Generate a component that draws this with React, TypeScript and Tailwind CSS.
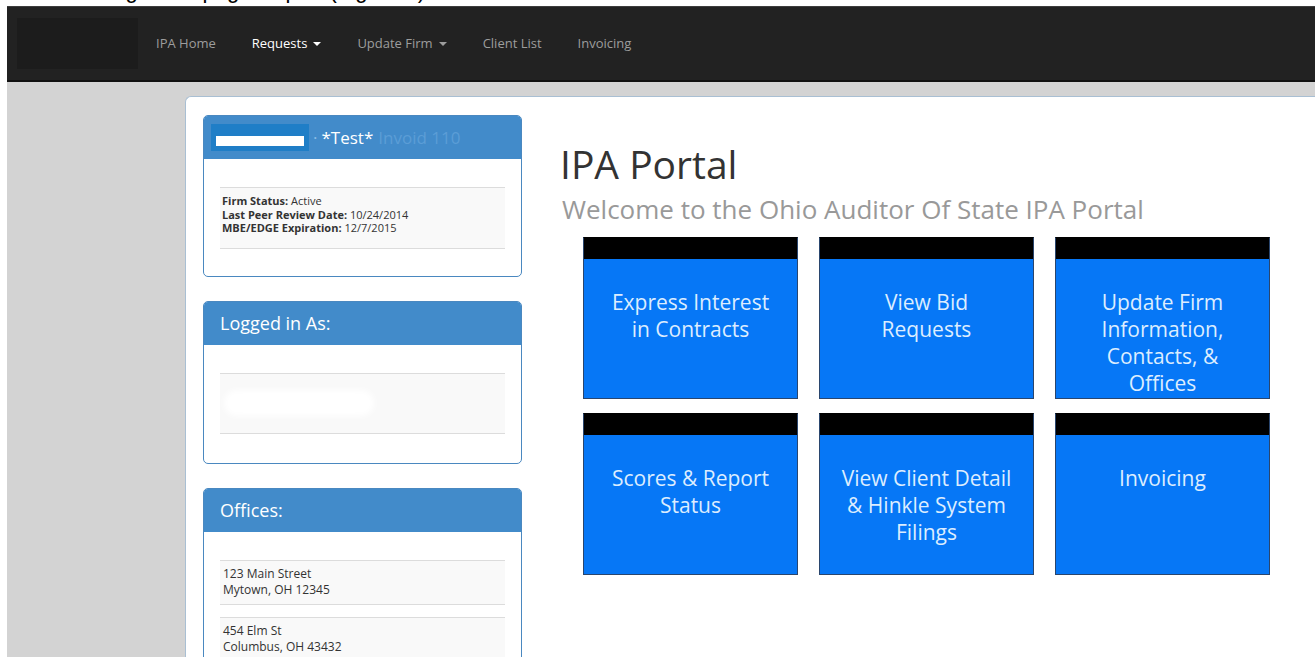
import type { ReactNode } from "react";

const navLinks = [
  { label: "IPA Home" },
  { label: "Requests", caret: true, active: true },
  { label: "Update Firm", caret: true },
  { label: "Client List" },
  { label: "Invoicing" },
];

const tiles = [
  ["Express Interest", "in Contracts"],
  ["View Bid", "Requests"],
  ["Update Firm", "Information,", "Contacts, &", "Offices"],
  ["Scores & Report", "Status"],
  ["View Client Detail", "& Hinkle System", "Filings"],
  ["Invoicing"],
];

const offices = [
  ["123 Main Street", "Mytown, OH 12345"],
  ["454 Elm St", "Columbus, OH 43432"],
];

const Panel = ({
  title,
  headerClass = "px-4",
  bodyClass = "",
  children,
}: {
  title: ReactNode;
  headerClass?: string;
  bodyClass?: string;
  children: ReactNode;
}) => (
  <div className="overflow-hidden rounded-[5px] border border-[#4a88c0] bg-white">
    <div
      className={`flex h-[43px] items-center bg-[#428bca] text-[18px] text-white ${headerClass}`}
    >
      {title}
    </div>
    <div className={`px-4 ${bodyClass}`}>{children}</div>
  </div>
);

export default function App() {
  return (
    <div className="h-[657px] w-[1315px] overflow-hidden bg-white font-['Open_Sans',sans-serif]">
      {/* caption line above the page, mostly cut off */}
      <div className="h-[6px] overflow-hidden">
        <div className="-mt-[20px] pl-[8px] font-['Liberation_Sans',sans-serif] text-[22px] leading-[22px] text-black">
          The following Homepage Report (Figure 1)
        </div>
      </div>

      <div className="ml-[7px] flex h-[651px] flex-col bg-[#d3d3d3]">
        <nav className="flex h-[76px] shrink-0 items-center border-t border-b-2 border-t-[#3d3d3d] border-b-[#111] bg-[#222]">
          <div className="ml-[10px] h-[51px] w-[121px] bg-[#1c1c1c]" />
          {navLinks.map((link) => (
            <a
              key={link.label}
              className={`flex items-center px-[18px] text-[13px] ${
                link.active ? "text-white" : "text-[#9d9d9d]"
              }`}
            >
              {link.label}
              {link.caret && (
                <span className="ml-[6px] h-0 w-0 border-x-[4px] border-t-[4px] border-x-transparent border-t-current" />
              )}
            </a>
          ))}
        </nav>

        <div className="flex flex-1 pl-[178px] pt-[14px]">
          <div className="flex flex-1 rounded-tl-[6px] border-l border-t border-[#a9bfd3] bg-white">
            {/* left column */}
            <div className="ml-[17px] flex w-[319px] shrink-0 flex-col gap-[24px] pt-[18px]">
              <Panel
                headerClass="pl-[7px]"
                bodyClass="pt-[28px] pb-[27px]"
                title={
                  <div className="flex items-center text-[17px]">
                    <span className="flex h-[27px] w-[98px] items-center bg-[#1f7ec7] px-[5px] pt-[6px]">
                      <span className="h-[10px] w-full bg-white" />
                    </span>
                    <span className="mx-[4px] text-[#8bbde6]">·</span>
                    <span>*Test*</span>
                    <span className="ml-[5px] text-[#5b9dd6]">Invoid 110</span>
                  </div>
                }
              >
                <div className="border-y border-[#dcdcdc] bg-[#f9f9f9] px-[2px] pt-[6px] pb-[13px] text-[11px] leading-[13.5px] text-[#333]">
                  <div>
                    <b>Firm Status:</b> Active
                  </div>
                  <div>
                    <b>Last Peer Review Date:</b> 10/24/2014
                  </div>
                  <div>
                    <b>MBE/EDGE Expiration:</b> 12/7/2015
                  </div>
                </div>
              </Panel>

              <Panel title="Logged in As:" bodyClass="pt-[28px] pb-[29px]">
                <div className="flex h-[61px] items-center border-y border-[#dcdcdc] bg-[#f9f9f9] px-[4px]">
                  <div className="h-[26px] w-[150px] rounded-full bg-white blur-[3px]" />
                </div>
              </Panel>

              <Panel title="Offices:" bodyClass="pt-[28px]">
                <div className="flex flex-col gap-[12px]">
                  {offices.map(([street, city]) => (
                    <div
                      key={street}
                      className="border-y border-[#dcdcdc] bg-[#f9f9f9] px-[3px] pt-[5px] pb-[6px] text-[12px] leading-[16px] text-[#333]"
                    >
                      <div>{street}</div>
                      <div>{city}</div>
                    </div>
                  ))}
                </div>
              </Panel>
            </div>

            {/* main content */}
            <div className="ml-[38px] flex flex-col pt-[47px]">
              <h1 className="text-[39px] leading-[40px] text-[#333]">IPA Portal</h1>
              <p className="mt-[10px] pl-[2px] text-[26px] leading-[30px] text-[#999]">
                Welcome to the Ohio Auditor Of State IPA Portal
              </p>
              <div className="ml-[23px] mt-[13px] grid grid-cols-[215px_215px_215px] gap-x-[21px] gap-y-[14px]">
                {tiles.map((lines) => (
                  <div
                    key={lines.join(" ")}
                    className="flex h-[162px] flex-col border border-[#2a466e] border-t-black bg-[#0677f6]"
                  >
                    <div className="h-[21px] bg-black" />
                    <div className="pt-[30px] text-center text-[21px] leading-[27px] text-[#dcedff]">
                      {lines.map((line) => (
                        <div key={line}>{line}</div>
                      ))}
                    </div>
                  </div>
                ))}
              </div>
            </div>
          </div>
        </div>
      </div>
    </div>
  );
}
